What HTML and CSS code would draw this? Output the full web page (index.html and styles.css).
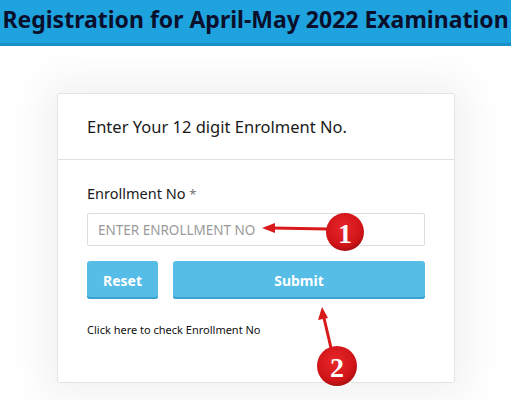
FILE: index.html
```html
<!DOCTYPE html>
<html lang="en">
<head>
<meta charset="utf-8">
<title>Registration for April-May 2022 Examination</title>
<link rel="stylesheet" href="styles.css">
</head>
<body>
<header class="topbar">
  <h1 class="title">Registration for April-May 2022 Examination</h1>
</header>
<main class="page">
  <section class="card">
    <div class="card-head">Enter Your 12 digit Enrolment No.</div>
    <form class="card-body">
      <label class="label" for="enr">Enrollment No <span class="req">*</span></label>
      <input id="enr" class="field" type="text" placeholder="ENTER ENROLLMENT NO">
      <div class="actions">
        <button type="button" class="btn btn-reset">Reset</button>
        <button type="button" class="btn btn-submit">Submit</button>
      </div>
      <a class="check" href="#">Click here to check Enrollment No</a>
    </form>
  </section>
</main>
<svg class="marks" width="511" height="400" viewBox="0 0 511 400" aria-hidden="true">
  <defs>
    <radialGradient id="dot" cx="45%" cy="38%" r="65%">
      <stop offset="0" stop-color="#e8272a"/>
      <stop offset="0.75" stop-color="#cf1418"/>
      <stop offset="1" stop-color="#a40c0f"/>
    </radialGradient>
  </defs>
  <line x1="328" y1="229" x2="272" y2="228" stroke="#d81a1c" stroke-width="3"/>
  <polygon points="262,228 275,223 275,233" fill="#d81a1c"/>
  <circle cx="345" cy="232" r="19" fill="url(#dot)"/>
  <text x="345" y="243" class="num">1</text>
  <line x1="331" y1="348" x2="324" y2="318" stroke="#d81a1c" stroke-width="3"/>
  <polygon points="322,307 318,320 328,318" fill="#d81a1c"/>
  <circle cx="337" cy="366" r="20" fill="url(#dot)"/>
  <text x="337" y="377" class="num">2</text>
</svg>
</body>
</html>
```
FILE: styles.css
```css
* { box-sizing: border-box; }
html, body { margin: 0; padding: 0; }
body {
  width: 511px;
  height: 400px;
  overflow: hidden;
  background: #ffffff;
  font-family: "Noto Sans", "Open Sans", sans-serif;
  color: #1b1b1b;
  position: relative;
}
.topbar {
  height: 46px;
  background: #1ea3df;
  border-bottom: 3px solid #178fc9;
  display: flex;
  align-items: center;
  justify-content: center;
}
.title {
  margin: 0;
  font-size: 23px;
  font-weight: 700;
  color: #0a0f2c;
  white-space: nowrap;
  letter-spacing: 0;
  padding-bottom: 6px;
}
.page {
  padding: 47px 0 0 57px;
}
.card {
  width: 398px;
  background: #fff;
  border: 1px solid #e4e4e4;
  border-radius: 3px;
  box-shadow: 0 0 40px 14px rgba(0, 0, 0, 0.055);
}
.card-head {
  height: 66px;
  padding: 0 29px;
  display: flex;
  align-items: center;
  font-size: 16.5px;
  color: #1a1a1a;
  border-bottom: 1px solid #e1e1e1;
}
.card-body {
  display: flex;
  flex-direction: column;
  padding: 23px 29px 45px;
}
.label {
  font-size: 14.5px;
  line-height: 20px;
  color: #1a1a1a;
}
.req { color: #777; font-size: 13px; }
.field {
  margin-top: 9px;
  height: 33px;
  border: 1px solid #dedede;
  border-radius: 2px;
  padding: 0 10px;
  font-family: "Noto Sans", sans-serif;
  font-size: 13.5px;
  color: #333;
  outline: none;
}
.field::placeholder { color: #9a9a9a; }
.actions {
  display: flex;
  gap: 15px;
  margin-top: 15px;
}
.btn {
  height: 38px;
  border: none;
  border-radius: 3px;
  background: #55bde6;
  box-shadow: inset 0 -2px 0 #3aa2cd;
  color: #fff;
  font-family: "Noto Sans", sans-serif;
  font-weight: 700;
  font-size: 14px;
  padding: 0;
}
.btn-reset { width: 71px; }
.btn-submit { flex: 1; }
.check {
  margin-top: 24px;
  font-size: 11px;
  line-height: 14px;
  color: #111;
  text-decoration: none;
}
.marks {
  position: absolute;
  left: 0;
  top: 0;
  pointer-events: none;
}
.num {
  font-family: "Liberation Serif", serif;
  font-weight: 700;
  font-size: 28px;
  fill: #fff;
  text-anchor: middle;
}
```
